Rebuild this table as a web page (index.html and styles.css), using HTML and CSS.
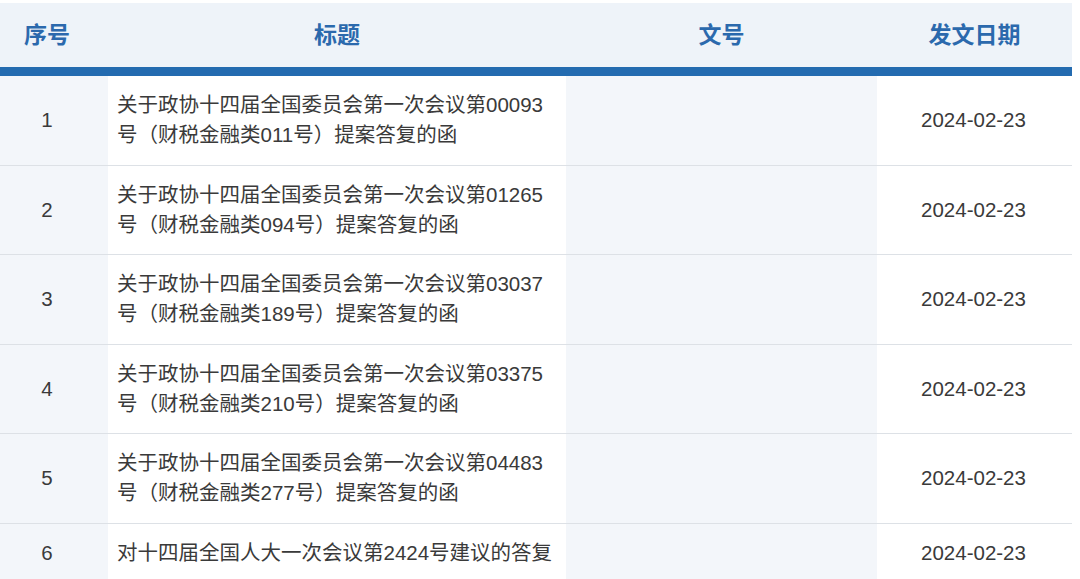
FILE: index.html
```html
<!DOCTYPE html>
<html lang="zh-CN">
<head>
<meta charset="utf-8">
<title>提案答复</title>
<link rel="stylesheet" href="styles.css">
</head>
<body>
<table class="doc-table">
  <colgroup>
    <col class="c-no">
    <col class="c-title">
    <col class="c-code">
    <col class="c-date">
  </colgroup>
  <thead>
    <tr>
      <th class="cell-no">序号</th>
      <th>标题</th>
      <th>文号</th>
      <th>发文日期</th>
    </tr>
  </thead>
  <tbody>
    <tr>
      <td class="cell-no">1</td>
      <td class="cell-title">关于政协十四届全国委员会第一次会议第00093号（财税金融类011号）提案答复的函</td>
      <td class="cell-code"></td>
      <td class="cell-date">2024-02-23</td>
    </tr>
    <tr>
      <td class="cell-no">2</td>
      <td class="cell-title">关于政协十四届全国委员会第一次会议第01265号（财税金融类094号）提案答复的函</td>
      <td class="cell-code"></td>
      <td class="cell-date">2024-02-23</td>
    </tr>
    <tr>
      <td class="cell-no">3</td>
      <td class="cell-title">关于政协十四届全国委员会第一次会议第03037号（财税金融类189号）提案答复的函</td>
      <td class="cell-code"></td>
      <td class="cell-date">2024-02-23</td>
    </tr>
    <tr>
      <td class="cell-no">4</td>
      <td class="cell-title">关于政协十四届全国委员会第一次会议第03375号（财税金融类210号）提案答复的函</td>
      <td class="cell-code"></td>
      <td class="cell-date">2024-02-23</td>
    </tr>
    <tr>
      <td class="cell-no">5</td>
      <td class="cell-title">关于政协十四届全国委员会第一次会议第04483号（财税金融类277号）提案答复的函</td>
      <td class="cell-code"></td>
      <td class="cell-date">2024-02-23</td>
    </tr>
    <tr>
      <td class="cell-no">6</td>
      <td class="cell-title">对十四届全国人大一次会议第2424号建议的答复</td>
      <td class="cell-code"></td>
      <td class="cell-date">2024-02-23</td>
    </tr>
  </tbody>
</table>
</body>
</html>
```
FILE: styles.css
```css
html, body {
  margin: 0;
  padding: 0;
  background: #ffffff;
}

body {
  padding-top: 3px;
  font-family: "Liberation Sans", "Noto Sans CJK SC", sans-serif;
  color: #3a3a3a;
  overflow: hidden;
}

.doc-table {
  width: 1072px;
  table-layout: fixed;
  border-collapse: collapse;
  border-spacing: 0;
}

.c-no { width: 108px; }
.c-title { width: 458px; }
.c-code { width: 311px; }
.c-date { width: 195px; }

.doc-table th {
  height: 60px;
  padding: 0 0 4px;
  background: #eef3f9;
  color: #2b69ad;
  font-size: 23px;
  font-weight: bold;
  text-align: center;
  vertical-align: middle;
  border-bottom: 9px solid #236bb0;
}

.doc-table th.cell-no,
.doc-table td.cell-no {
  padding-right: 14px;
}

.doc-table td {
  padding: 14.25px 0;
  font-size: 20.5px;
  line-height: 30px;
  vertical-align: middle;
  border-bottom: 1px solid #dde1e6;
  text-align: center;
}

.doc-table td.cell-no {
  background: #f3f6fa;
}

.doc-table td.cell-title {
  text-align: left;
  padding-left: 9px;
  padding-right: 9px;
  background: #ffffff;
}

.doc-table td.cell-code {
  background: #f3f6fa;
}

.doc-table td.cell-date {
  background: #ffffff;
  padding-right: 2px;
}
```
